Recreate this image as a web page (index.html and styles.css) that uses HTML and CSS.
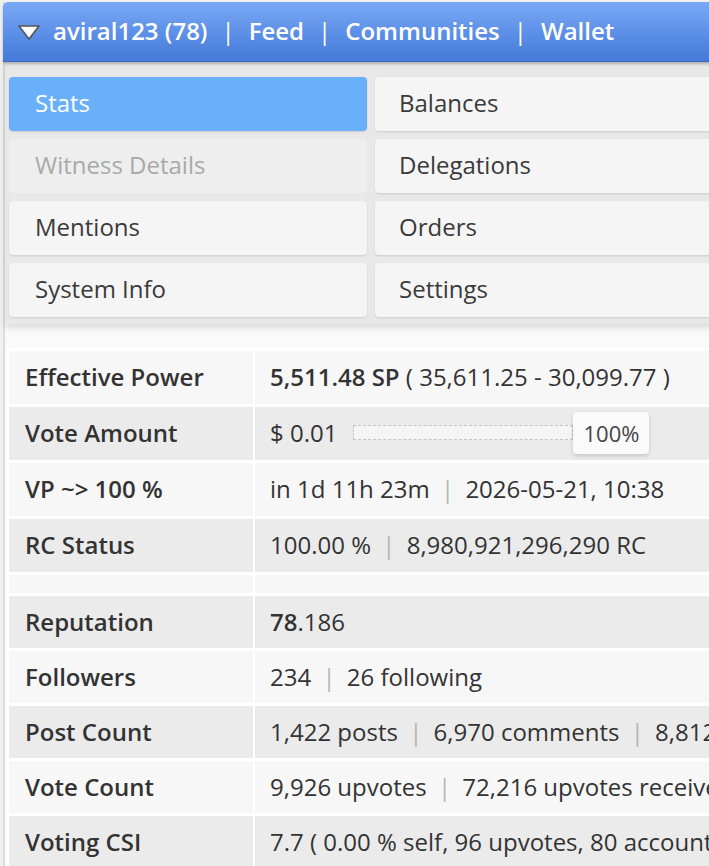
FILE: index.html
```html
<!DOCTYPE html>
<html lang="en">
<head>
    <meta charset="UTF-8">
    <title>aviral123 - Stats</title>
    <link rel="stylesheet" href="styles.css">
</head>
<body>
    <div class="page">
        <div class="topbar">
            <svg class="caret" width="24" height="17" viewBox="0 0 24 17">
                <path d="M2 2 L22 2 L12 15 Z" fill="#ffffff" stroke="#555555" stroke-width="1.6" stroke-linejoin="round"/>
            </svg>
            <span class="nav-link">aviral123 (78)</span>
            <span class="nav-sep">|</span>
            <span class="nav-link">Feed</span>
            <span class="nav-sep">|</span>
            <span class="nav-link">Communities</span>
            <span class="nav-sep">|</span>
            <span class="nav-link">Wallet</span>
        </div>

        <div class="menu">
            <div class="tab active">Stats</div>
            <div class="tab">Balances</div>
            <div class="tab disabled">Witness Details</div>
            <div class="tab">Delegations</div>
            <div class="tab">Mentions</div>
            <div class="tab">Orders</div>
            <div class="tab">System Info</div>
            <div class="tab">Settings</div>
        </div>

        <div class="stats">
            <table>
                <colgroup>
                    <col class="col-label">
                    <col class="col-value">
                </colgroup>
                <tr>
                    <td class="label">Effective Power</td>
                    <td><b>5,511.48 SP</b> ( 35,611.25 - 30,099.77 )</td>
                </tr>
                <tr>
                    <td class="label">Vote Amount</td>
                    <td>
                        <div class="vote">
                            <span>$ 0.01</span>
                            <div class="slider"></div>
                            <div class="slider-tip">100%</div>
                        </div>
                    </td>
                </tr>
                <tr>
                    <td class="label">VP ~&gt; 100 %</td>
                    <td>in 1d 11h 23m <span class="sep">|</span> 2026-05-21, 10:38</td>
                </tr>
                <tr>
                    <td class="label">RC Status</td>
                    <td>100.00 % <span class="sep">|</span> 8,980,921,296,290 RC</td>
                </tr>
                <tr class="spacer">
                    <td></td>
                    <td></td>
                </tr>
                <tr class="compact">
                    <td class="label">Reputation</td>
                    <td><b>78</b>.186</td>
                </tr>
                <tr class="compact">
                    <td class="label">Followers</td>
                    <td>234 <span class="sep">|</span> 26 following</td>
                </tr>
                <tr class="compact">
                    <td class="label">Post Count</td>
                    <td>1,422 posts <span class="sep">|</span> 6,970 comments <span class="sep">|</span> 8,812 replies</td>
                </tr>
                <tr class="compact">
                    <td class="label">Vote Count</td>
                    <td>9,926 upvotes <span class="sep">|</span> 72,216 upvotes received</td>
                </tr>
                <tr class="compact">
                    <td class="label">Voting CSI</td>
                    <td>7.7 ( 0.00 % self, 96 upvotes, 80 accounts, last 7d )</td>
                </tr>
            </table>
        </div>
    </div>
</body>
</html>
```

FILE: styles.css
```css
* {
    margin: 0;
    padding: 0;
    box-sizing: border-box;
}

body {
    font-family: 'Open Sans', 'Liberation Sans', sans-serif;
    background-color: #f0f0f0;
    color: #333333;
    overflow: hidden;
}

.page {
    width: 760px;
    margin-left: 3px;
    border-left: 2px solid #dcdcdc;
    background-color: #fafafa;
    min-height: 866px;
}

/* top navigation */
.topbar {
    display: flex;
    align-items: center;
    height: 60px;
    margin-top: 2px;
    margin-left: -2px;
    padding: 0 0 3px 14px;
    border-radius: 5px 5px 0 0;
    background: linear-gradient(to bottom, #7aa9f6 0%, #5b8ee6 55%, #4679d8 100%);
    border-bottom: 1px solid #3b6bc4;
    box-shadow: 0 2px 3px rgba(0, 0, 0, 0.25);
    position: relative;
    z-index: 2;
}

.caret {
    margin-right: 12px;
    margin-top: 4px;
}

.nav-link {
    color: #ffffff;
    font-size: 24px;
    font-weight: 600;
}

.nav-sep {
    color: #ffffff;
    font-size: 24px;
    margin: 0 14px;
}

/* tab buttons */
.menu {
    display: grid;
    grid-template-columns: 358px 358px;
    gap: 8px;
    padding: 15px 6px 7px 4px;
    background-color: #e8e8e8;
    box-shadow: 0 4px 6px rgba(0, 0, 0, 0.12);
    position: relative;
    z-index: 1;
}

.tab {
    height: 54px;
    display: flex;
    align-items: center;
    padding: 0 0 3px 26px;
    font-size: 24px;
    color: #3a3a3a;
    background-color: #f5f5f5;
    border-radius: 4px;
    box-shadow: 0 1px 2px rgba(0, 0, 0, 0.12);
}

.tab:nth-child(even) {
    padding-left: 24px;
}

.tab.active {
    background-color: #69b0fb;
    color: #ffffff;
}

.tab.disabled {
    background-color: #eeeeee;
    color: #a9a9a9;
    box-shadow: none;
}

/* stats table */
.stats {
    padding: 24px 0 0 2px;
}

table {
    width: 760px;
    table-layout: fixed;
    border-collapse: separate;
    border-spacing: 2px 3px;
    background-color: #ffffff;
    font-size: 24px;
}

.col-label {
    width: 244px;
}

td {
    height: 53px;
    padding: 0 15px 2px 15px;
    white-space: nowrap;
    overflow: visible;
    background-color: #f7f7f7;
}

tr:nth-child(even) td {
    background-color: #ebebeb;
}

td.label {
    padding-left: 16px;
    font-weight: 600;
}

tr.spacer td {
    height: 18px;
    padding: 0;
}

tr.compact td {
    height: 52px;
}

b {
    font-weight: 600;
}

.sep {
    color: #b5b5b5;
    margin: 0 5px;
}

.vote {
    display: flex;
    align-items: center;
}

.slider {
    width: 220px;
    height: 15px;
    margin-left: 16px;
    background-color: #f5f5f5;
    border: 1px dashed #c4c4c4;
}

.slider-tip {
    width: 76px;
    height: 42px;
    display: flex;
    align-items: center;
    justify-content: center;
    font-size: 22px;
    color: #444444;
    background-color: #fafafa;
    border-radius: 4px;
    box-shadow: 0 2px 4px rgba(0, 0, 0, 0.15);
}
```
